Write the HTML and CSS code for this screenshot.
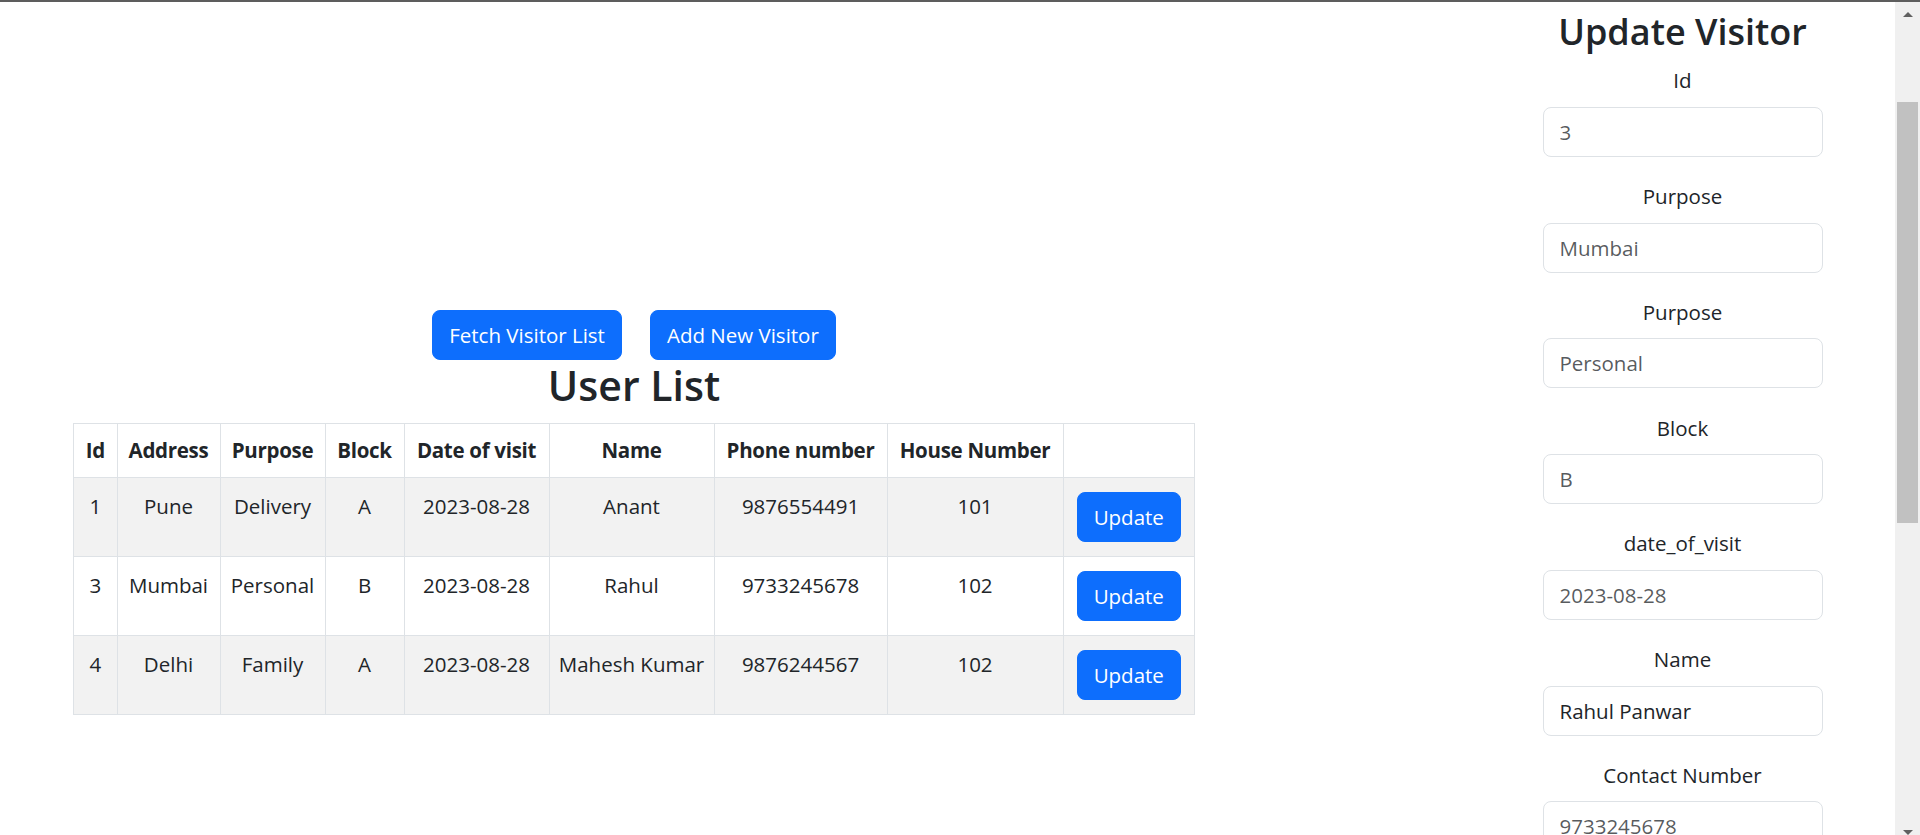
FILE: index.html
```html
<!DOCTYPE html>
<html lang="en">
<head>
<meta charset="utf-8">
<title>Visitor Management</title>
<link rel="stylesheet" href="styles.css">
</head>
<body>
<div class="window">
  <div class="page">
    <main class="list-panel">
      <div class="actions">
        <button class="btn" type="button">Fetch Visitor List</button>
        <button class="btn" type="button">Add New Visitor</button>
      </div>
      <h2 class="list-title">User List</h2>
      <table class="visitors">
        <colgroup>
          <col class="c-id">
          <col class="c-address">
          <col class="c-purpose">
          <col class="c-block">
          <col class="c-date">
          <col class="c-name">
          <col class="c-phone">
          <col class="c-house">
          <col class="c-action">
        </colgroup>
        <thead>
          <tr>
            <th>Id</th>
            <th>Address</th>
            <th>Purpose</th>
            <th>Block</th>
            <th>Date of visit</th>
            <th>Name</th>
            <th>Phone number</th>
            <th>House Number</th>
            <th></th>
          </tr>
        </thead>
        <tbody>
          <tr>
            <td>1</td>
            <td>Pune</td>
            <td>Delivery</td>
            <td>A</td>
            <td>2023-08-28</td>
            <td>Anant</td>
            <td>9876554491</td>
            <td>101</td>
            <td><button class="btn btn-row" type="button">Update</button></td>
          </tr>
          <tr>
            <td>3</td>
            <td>Mumbai</td>
            <td>Personal</td>
            <td>B</td>
            <td>2023-08-28</td>
            <td>Rahul</td>
            <td>9733245678</td>
            <td>102</td>
            <td><button class="btn btn-row" type="button">Update</button></td>
          </tr>
          <tr>
            <td>4</td>
            <td>Delhi</td>
            <td>Family</td>
            <td>A</td>
            <td>2023-08-28</td>
            <td>Mahesh Kumar</td>
            <td>9876244567</td>
            <td>102</td>
            <td><button class="btn btn-row" type="button">Update</button></td>
          </tr>
        </tbody>
      </table>
    </main>
    <aside class="form-panel">
      <h3 class="form-title">Update Visitor</h3>
      <form class="form">
        <div class="field">
          <label for="f-id">Id</label>
          <input id="f-id" type="text" placeholder="3">
        </div>
        <div class="field">
          <label for="f-address">Purpose</label>
          <input id="f-address" type="text" placeholder="Mumbai">
        </div>
        <div class="field">
          <label for="f-purpose">Purpose</label>
          <input id="f-purpose" type="text" placeholder="Personal">
        </div>
        <div class="field">
          <label for="f-block">Block</label>
          <input id="f-block" type="text" placeholder="B">
        </div>
        <div class="field">
          <label for="f-date">date_of_visit</label>
          <input id="f-date" type="text" placeholder="2023-08-28">
        </div>
        <div class="field">
          <label for="f-name">Name</label>
          <input id="f-name" type="text" value="Rahul Panwar">
        </div>
        <div class="field">
          <label for="f-contact">Contact Number</label>
          <input id="f-contact" type="text" placeholder="9733245678">
        </div>
      </form>
    </aside>
  </div>
  <div class="scrollbar">
    <div class="sb-arrow"><span class="tri-up"></span></div>
    <div class="sb-track"><div class="sb-thumb"></div></div>
    <div class="sb-arrow"><span class="tri-down"></span></div>
  </div>
</div>
</body>
</html>
```

FILE: styles.css
```css
* {
  box-sizing: border-box;
}

html,
body {
  margin: 0;
  height: 835px;
  overflow: hidden;
}

body {
  font-family: "Open Sans", "Noto Sans", sans-serif;
  font-size: 20.5px;
  line-height: 32px;
  color: #212529;
  background: #ffffff;
}

.window {
  display: flex;
  align-items: flex-start;
  height: 835px;
  border-top: 2px solid #5d5d5d;
  overflow: hidden;
}

.page {
  flex: 1;
  display: flex;
  justify-content: space-between;
  align-items: flex-start;
}

/* ---------- left: list ---------- */

.list-panel {
  width: 1268px;
  padding-top: 308px;
  display: flex;
  flex-direction: column;
  align-items: center;
}

.actions {
  display: flex;
  gap: 28px;
}

.btn {
  font: inherit;
  line-height: 32px;
  height: 50px;
  padding: 8px 16px;
  color: #ffffff;
  background: #0d6efd;
  border: 1px solid #0d6efd;
  border-radius: 8px;
  cursor: pointer;
  white-space: nowrap;
}

.list-title {
  margin: 0 0 11.5px;
  font-size: 41px;
  line-height: 51px;
  font-weight: 600;
  color: #212529;
}

.visitors {
  width: 1121px;
  table-layout: fixed;
  border-collapse: collapse;
  text-align: center;
}

.c-id { width: 43.5px; }
.c-address { width: 103px; }
.c-purpose { width: 105px; }
.c-block { width: 79px; }
.c-date { width: 145px; }
.c-name { width: 165px; }
.c-phone { width: 173px; }
.c-house { width: 176px; }
.c-action { width: 131.5px; }

.visitors th,
.visitors td {
  border: 1px solid #dee2e6;
  padding: 0 4px;
  white-space: nowrap;
}

.visitors thead tr {
  height: 54px;
}

.visitors th {
  font-weight: 700;
  letter-spacing: -0.3px;
  vertical-align: middle;
  background: #ffffff;
}

.visitors tbody tr {
  height: 79px;
}

.visitors td {
  vertical-align: top;
  padding-top: 12.5px;
}

.visitors tbody tr:nth-child(odd) td {
  background: #f2f2f2;
}

.btn-row {
  margin-top: 2px;
  vertical-align: top;
}

/* ---------- right: form ---------- */

.form-panel {
  width: 425px;
  padding-top: 7.2px;
  display: flex;
  flex-direction: column;
  align-items: center;
}

.form-title {
  margin: 0 0 10.3px;
  font-size: 36px;
  line-height: 45px;
  font-weight: 600;
  color: #212529;
}

.form {
  display: flex;
  flex-direction: column;
  align-items: center;
}

.field {
  width: 280px;
  margin-bottom: 23.1px;
}

.field label {
  display: block;
  text-align: center;
  margin-bottom: 10.6px;
}

.field input {
  display: block;
  width: 100%;
  height: 50px;
  padding: 8px 16px;
  font: inherit;
  line-height: 32px;
  color: #212529;
  background: #ffffff;
  border: 1px solid #dee2e6;
  border-radius: 8px;
  outline: none;
}

.field input::placeholder {
  color: rgba(33, 37, 41, 0.75);
  opacity: 1;
}

/* ---------- fake scrollbar ---------- */

.scrollbar {
  width: 25px;
  height: 843px;
  flex: none;
  display: flex;
  flex-direction: column;
  background: #f0f0f0;
}

.sb-arrow {
  height: 25px;
  flex: none;
  display: flex;
  align-items: center;
  justify-content: center;
}

.tri-up {
  width: 0;
  height: 0;
  border-left: 5px solid transparent;
  border-right: 5px solid transparent;
  border-bottom: 5px solid #606060;
}

.tri-down {
  width: 0;
  height: 0;
  border-left: 5px solid transparent;
  border-right: 5px solid transparent;
  border-top: 5px solid #606060;
}

.sb-track {
  flex: 1;
}

.sb-thumb {
  margin: 75px 2px 0 2px;
  height: 421px;
  background: #c1c1c1;
}
```
